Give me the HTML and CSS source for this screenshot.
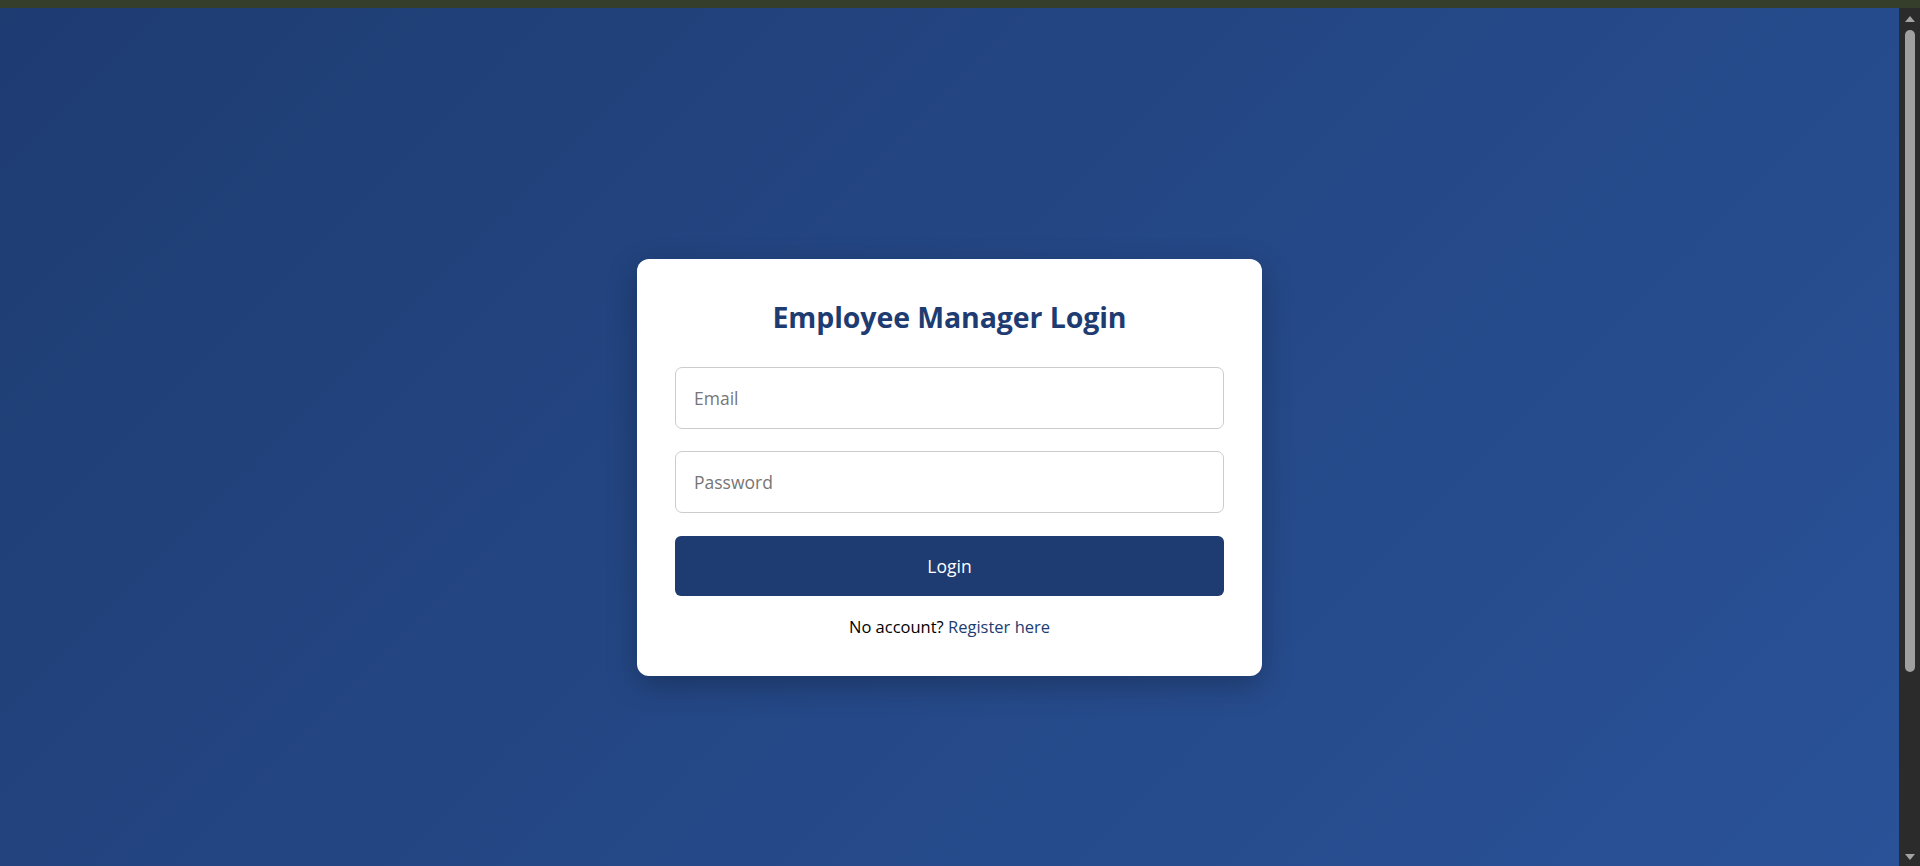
FILE: index.html
```html
<!DOCTYPE html>
<html lang="en">
<head>
<meta charset="utf-8">
<title>Employee Manager Login</title>
<link rel="stylesheet" href="styles.css">
</head>
<body>
  <div class="topbar"></div>
  <div class="window">
    <main class="page">
      <form class="card">
        <h2 class="title">Employee Manager Login</h2>
        <input class="field" type="email" placeholder="Email">
        <input class="field" type="password" placeholder="Password">
        <button class="btn" type="button">Login</button>
        <p class="note">No account? <a class="link" href="#">Register here</a></p>
      </form>
    </main>
    <div class="scrollbar">
      <div class="arrow arrow-up"></div>
      <div class="thumb"></div>
      <div class="track-rest"></div>
      <div class="arrow arrow-down"></div>
    </div>
  </div>
</body>
</html>
```

FILE: styles.css
```css
* { box-sizing: border-box; }

html, body {
  margin: 0;
  padding: 0;
  height: 100%;
  overflow: hidden;
}

body {
  font-family: "Open Sans", "Noto Sans", sans-serif;
  display: flex;
  flex-direction: column;
  background: #2b2b2b;
}

.topbar {
  height: 8px;
  flex: 0 0 8px;
  background: #343e2b;
}

.window {
  flex: 1;
  display: flex;
  min-height: 0;
}

.page {
  flex: 1;
  display: flex;
  justify-content: center;
  align-items: flex-start;
  padding-top: 251px;
  background: linear-gradient(135deg, #1e3c72 0%, #2a5298 100%);
}

.card {
  width: 625px;
  background: #ffffff;
  border-radius: 12px;
  padding: 38px 38px 38px;
  box-shadow: 0 10px 30px rgba(0, 0, 0, 0.25);
  display: flex;
  flex-direction: column;
}

.title {
  margin: 2px 0 31px;
  text-align: center;
  color: #1e3c72;
  font-size: 28.5px;
  font-weight: 700;
  line-height: 37px;
  letter-spacing: -0.1px;
}

.field {
  display: block;
  width: 100%;
  height: 62px;
  padding: 0 18px;
  margin: 0 0 22px;
  border: 1px solid #cccccc;
  border-radius: 7px;
  font-family: inherit;
  font-size: 17.5px;
  color: #333;
  background: #fff;
  outline: none;
}

.field::placeholder {
  color: #767676;
}

.btn {
  display: block;
  width: 100%;
  height: 60px;
  margin: 1px 0 0;
  border: none;
  border-radius: 6px;
  background: #1e3c72;
  color: #ffffff;
  font-family: inherit;
  font-size: 17.5px;
}

.note {
  margin: 20px 0 0;
  text-align: center;
  font-size: 16.5px;
  line-height: 22px;
  color: #000;
}

.link {
  color: #1e3c72;
  text-decoration: none;
}

.scrollbar {
  width: 21px;
  flex: 0 0 21px;
  background: #2b2b2b;
  display: flex;
  flex-direction: column;
  align-items: center;
  padding: 4px 0 2px;
}

.arrow {
  width: 0;
  height: 0;
  border-left: 5px solid transparent;
  border-right: 5px solid transparent;
}

.arrow-up {
  border-bottom: 6px solid #a3a3a3;
  margin: 4px 0 8px;
}

.arrow-down {
  border-top: 6px solid #a3a3a3;
  margin: 0 0 4px;
}

.thumb {
  width: 10px;
  height: 642px;
  border-radius: 5px;
  background: #a0a0a0;
}

.track-rest {
  flex: 1;
}
```
